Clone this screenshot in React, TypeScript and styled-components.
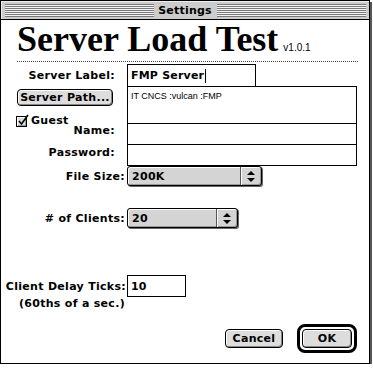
import React from "react";
import styled, { createGlobalStyle } from "styled-components";

const GlobalStyle = createGlobalStyle`
  html, body {
    margin: 0;
    padding: 0;
    background: #fff;
  }
  body {
    font-family: "DejaVu Sans", "Liberation Sans", sans-serif;
    font-size: 11px;
    font-weight: bold;
    color: #000;
  }
`;

const Window = styled.div`
  box-sizing: border-box;
  width: 370px;
  height: 364px;
  border: 1px solid #000;
  box-shadow: 2px 2px 0 #555;
  display: flex;
  flex-direction: column;
  background: #fff;
`;

const TitleBar = styled.div`
  height: 19px;
  padding: 3px 3px 3px 4px;
  box-sizing: border-box;
  background: #cccccc;
  border-bottom: 1px solid #000;
  box-shadow: inset 1px 1px 0 #eee;
  display: flex;
  align-items: center;
  flex: none;
`;

const Stripes = styled.div`
  flex: 1;
  height: 13px;
  background: repeating-linear-gradient(
    to bottom,
    #7a7a7a 0 1px,
    #f2f2f2 1px 2px
  );
`;

const TitleText = styled.div`
  padding: 0 5px 0 4px;
  line-height: 13px;
  font-size: 11px;
  letter-spacing: 0.2px;
`;

const Content = styled.div`
  flex: 1;
  display: flex;
  flex-direction: column;
`;

const Header = styled.div`
  display: flex;
  align-items: baseline;
  padding-left: 16px;
  margin-top: 1px;
  height: 36px;
`;

const Heading = styled.h1`
  margin: 0;
  font-family: "Liberation Serif", "Times New Roman", serif;
  font-size: 36px;
  line-height: 36px;
  font-weight: bold;
`;

const Version = styled.span`
  margin-left: 5px;
  font-family: "Liberation Sans", Arial, sans-serif;
  font-size: 10px;
  font-weight: normal;
`;

const Divider = styled.div`
  margin: 4px 0 0 16px;
  width: 341px;
  height: 1px;
  background-image: linear-gradient(to right, #444 50%, transparent 50%);
  background-size: 2px 1px;
`;

const UpperGrid = styled.div`
  margin-top: 2px;
  display: grid;
  grid-template-columns: 126px auto;
  align-items: center;
`;

const Label = styled.div<{ $inset?: number; $top?: boolean; $mt?: number }>`
  text-align: right;
  line-height: 13px;
  padding-right: ${(p) => p.$inset ?? 2}px;
  white-space: nowrap;
  letter-spacing: 0.3px;
  align-self: ${(p) => (p.$top ? "start" : "center")};
  margin-top: ${(p) => p.$mt ?? 0}px;
`;

const LeftCell = styled.div`
  height: 37px;
  align-self: start;
  display: flex;
  flex-direction: column;
  align-items: flex-start;
  padding-left: 15px;
  overflow: visible;
`;

const PushButton = styled.button<{ $w: number }>`
  box-sizing: border-box;
  width: ${(p) => p.$w}px;
  height: 19px;
  margin: 0;
  padding: 0;
  border: 1px solid #000;
  border-radius: 4px;
  background: #dddddd;
  box-shadow: inset 1px 1px 0 #fff, inset -1px -1px 0 #888;
  font-family: inherit;
  font-size: 11px;
  font-weight: bold;
  letter-spacing: 0.3px;
  line-height: 15px;
  color: #000;
`;

const PathButton = styled(PushButton)`
  height: 18px;
  margin: 2px 0 0 1px;
`;

const CheckRow = styled.div`
  margin-top: 9px;
  display: flex;
  align-items: center;
  gap: 4px;
  height: 12px;
`;

const CheckBox = styled.div`
  position: relative;
  box-sizing: border-box;
  width: 11px;
  height: 11px;
  border: 1px solid #000;
  background: #ddd;
  box-shadow: inset 1px 1px 0 #fff, inset -1px -1px 0 #999;
`;

const CheckMark = styled.svg`
  position: absolute;
  left: 0;
  top: -3px;
  width: 12px;
  height: 12px;
`;

const CheckText = styled.span`
  line-height: 12px;
  letter-spacing: 0.3px;
`;

const TextBox = styled.div<{ $w: number; $h: number; $overlap?: boolean }>`
  box-sizing: border-box;
  width: ${(p) => p.$w}px;
  height: ${(p) => p.$h}px;
  margin-top: ${(p) => (p.$overlap ? -1 : 0)}px;
  border: 1px solid #000;
  background: #fff;
  display: flex;
  align-items: center;
  padding-left: 3px;
  letter-spacing: 0.2px;
`;

const PathBox = styled(TextBox)`
  align-items: flex-start;
  padding-top: 4px;
  font-family: "Liberation Sans", Arial, sans-serif;
  font-weight: normal;
  font-size: 9px;
  letter-spacing: 0;
`;

const Caret = styled.span`
  display: inline-block;
  width: 1px;
  height: 14px;
  margin-left: 1px;
  background: #000;
`;

const Row = styled.div<{ $mt: number; $h: number }>`
  display: flex;
  align-items: center;
  margin-top: ${(p) => p.$mt}px;
  height: ${(p) => p.$h}px;
  & > ${Label} {
    width: 126px;
    box-sizing: border-box;
  }
`;

const Popup = styled.div<{ $w: number }>`
  box-sizing: border-box;
  width: ${(p) => p.$w}px;
  height: 20px;
  border: 1px solid #000;
  border-radius: 3px;
  background: #d4d4d4;
  box-shadow: 1px 1px 0 #666, inset 1px 1px 0 #fff, inset -1px -1px 0 #999;
  display: flex;
  align-items: stretch;
  align-self: flex-start;
`;

const PopupValue = styled.div`
  flex: 1;
  display: flex;
  align-items: center;
  padding-left: 4px;
  letter-spacing: 0.3px;
`;

const PopupArrow = styled.div`
  width: 20px;
  border-left: 1px solid #555;
  box-shadow: inset 1px 0 0 #fff;
  display: flex;
  align-items: center;
  justify-content: center;
`;

const Note = styled.div`
  width: 126px;
  box-sizing: border-box;
  padding-right: 2px;
  text-align: right;
  line-height: 13px;
  letter-spacing: 0.3px;
`;

const ButtonRow = styled.div`
  margin-top: 14px;
  display: flex;
  justify-content: flex-end;
  align-items: center;
  gap: 14px;
  padding-right: 12px;
  height: 29px;
`;

const DefaultRing = styled.div`
  box-sizing: border-box;
  width: 60px;
  height: 29px;
  border: 3px solid #000;
  border-radius: 8px;
  display: flex;
  align-items: center;
  justify-content: center;
  background: #fff;
`;

const Arrows = () => (
  <svg width="8" height="11" viewBox="0 0 8 11">
    <path d="M4 0 L8 4 H0 Z" fill="#000" />
    <path d="M0 7 H8 L4 11 Z" fill="#000" />
  </svg>
);

const App = () => {
  return (
    <>
      <GlobalStyle />
      <Window>
        <TitleBar>
          <Stripes />
          <TitleText>Settings</TitleText>
          <Stripes />
        </TitleBar>
        <Content>
          <Header>
            <Heading>Server Load Test</Heading>
            <Version>v1.0.1</Version>
          </Header>
          <Divider />
          <UpperGrid>
            <Label $inset={12}>Server Label:</Label>
            <TextBox $w={129} $h={23}>
              FMP Server
              <Caret />
            </TextBox>

            <LeftCell>
              <PathButton $w={96}>Server Path...</PathButton>
              <CheckRow>
                <CheckBox>
                  <CheckMark viewBox="0 0 12 12">
                    <path
                      d="M2 7 L4.5 10 L11 1"
                      fill="none"
                      stroke="#000"
                      strokeWidth="1.6"
                    />
                  </CheckMark>
                </CheckBox>
                <CheckText>Guest</CheckText>
              </CheckRow>
            </LeftCell>
            <PathBox $w={230} $h={38} $overlap>
              IT CNCS :vulcan :FMP
            </PathBox>

            <Label $inset={12} $top>
              Name:
            </Label>
            <TextBox $w={230} $h={22} $overlap />

            <Label $inset={12} $top $mt={1}>
              Password:
            </Label>
            <TextBox $w={230} $h={22} $overlap />
          </UpperGrid>

          <Row $mt={0} $h={21}>
            <Label>File Size:</Label>
            <Popup $w={135}>
              <PopupValue>200K</PopupValue>
              <PopupArrow>
                <Arrows />
              </PopupArrow>
            </Popup>
          </Row>

          <Row $mt={21} $h={21}>
            <Label># of Clients:</Label>
            <Popup $w={111}>
              <PopupValue>20</PopupValue>
              <PopupArrow>
                <Arrows />
              </PopupArrow>
            </Popup>
          </Row>

          <Row $mt={46} $h={22}>
            <Label $inset={1}>Client Delay Ticks:</Label>
            <TextBox $w={59} $h={22}>
              10
            </TextBox>
          </Row>
          <Note>(60ths of a sec.)</Note>

          <ButtonRow>
            <PushButton $w={58}>Cancel</PushButton>
            <DefaultRing>
              <PushButton $w={50}>OK</PushButton>
            </DefaultRing>
          </ButtonRow>
        </Content>
      </Window>
    </>
  );
};

export default App;
